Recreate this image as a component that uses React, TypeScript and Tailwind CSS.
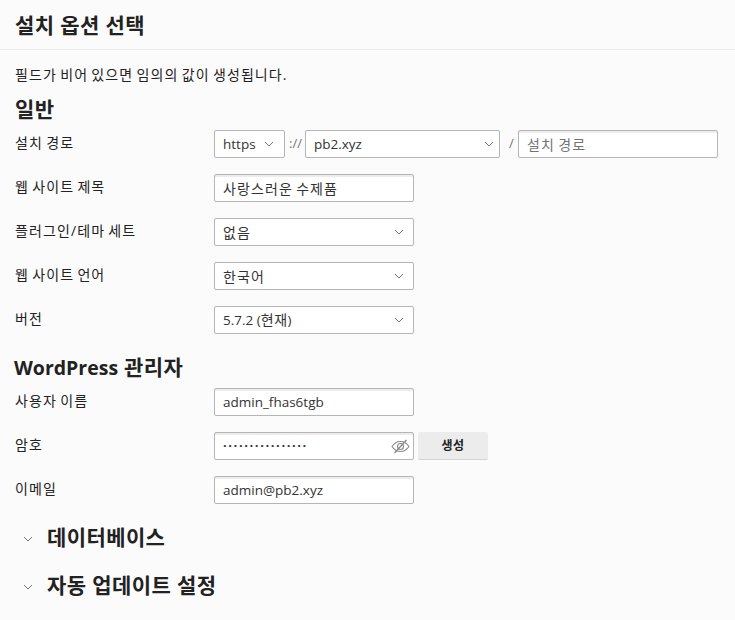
import React from "react";

const font = { fontFamily: '"Open Sans","Noto Sans CJK KR",sans-serif' };
const ko = "text-[14px] tracking-[1.1px] [word-spacing:-1.5px]";
const lat = "text-[13.5px]";
const head = "text-[21px] tracking-[0.4px] leading-[26px] font-bold text-[#222]";

function Chevron({ className = "" }: { className?: string }) {
  return (
    <svg width="10" height="10" viewBox="0 0 10 10" className={className} fill="none" stroke="#737373" strokeWidth="1">
      <path d="M1 3l4 4 4-4" />
    </svg>
  );
}

function Select({ children, className, pr = "pr-[9px]" }: { children: React.ReactNode; className: string; pr?: string }) {
  return (
    <div className={`h-7 flex items-center justify-between pl-[8px] ${pr} bg-white border border-[#b5b5b5] rounded-[2px] text-[#333] ${className}`}>
      <span>{children}</span>
      <Chevron />
    </div>
  );
}

function Input({ children, className = "w-[200px]", text = "text-[#333]" }: { children: React.ReactNode; className?: string; text?: string }) {
  return (
    <div className={`relative h-7 flex items-center pl-[8px] bg-white border border-[#b5b5b5] rounded-[2px] shadow-[inset_0_2px_0_#ededed] ${text} ${className}`}>
      {children}
    </div>
  );
}

function Row({ label, children, className = "mt-[16px]" }: { label: string; children: React.ReactNode; className?: string }) {
  return (
    <div className={`flex items-start ${className}`}>
      <div className={`w-[199px] leading-[26px] text-[#222] ${ko}`}>{label}</div>
      {children}
    </div>
  );
}

function Collapsed({ title, className = "" }: { title: string; className?: string }) {
  return (
    <div className={`flex items-center ${className}`}>
      <Chevron className="ml-[23px] mt-[4px]" />
      <h2 className={`ml-[14px] ${head}`}>{title}</h2>
    </div>
  );
}

export default function App() {
  return (
    <div style={font} className="w-[735px] h-[620px] overflow-hidden bg-[#fbfbfb]">
      <header className="h-[50px] border-b border-[#ececec] pl-[15px] pt-[12px]">
        <h1 className={head}>설치 옵션 선택</h1>
      </header>
      <main className="pl-[15px]">
        <p className={`mt-[15px] leading-[20px] text-[#222] ${ko}`}>필드가 비어 있으면 임의의 값이 생성됩니다.</p>
        <h2 className={`mt-[11px] ${head}`}>일반</h2>
        <Row label="설치 경로" className="mt-[8px]">
          <Select className={`w-[71px] ${lat}`} pr="pr-[10px]">https</Select>
          <span className="w-[20px] pl-[4px] text-[13px] leading-[26px] text-[#737373]">://</span>
          <Select className={`w-[195px] ${lat}`} pr="pr-[5px]">pb2.xyz</Select>
          <span className="w-[18px] pl-[9px] text-[13px] leading-[26px] text-[#737373]">/</span>
          <Input className={`w-[200px] ${ko}`} text="text-[#737373]">설치 경로</Input>
        </Row>
        <Row label="웹 사이트 제목">
          <Input className={`w-[200px] ${ko}`}>사랑스러운 수제품</Input>
        </Row>
        <Row label="플러그인/테마 세트">
          <Select className={`w-[200px] ${ko}`}>없음</Select>
        </Row>
        <Row label="웹 사이트 언어">
          <Select className={`w-[200px] ${ko}`}>한국어</Select>
        </Row>
        <Row label="버전">
          <Select className={`w-[200px] text-[13.5px]`}>
            5.7.2 (<span className="text-[14px] tracking-[0.5px]">현재</span>)
          </Select>
        </Row>
        <h2 className={`mt-[20px] -ml-px ${head}`}>
          <span className="text-[19.500px] tracking-normal">WordPress</span> 관리자
        </h2>
        <Row label="사용자 이름" className="mt-[7px]">
          <Input className={`w-[200px] ${lat}`}>admin_fhas6tgb</Input>
        </Row>
        <Row label="암호">
          <Input className="w-[200px] text-[13px] font-bold tracking-[1.6px]">
            ················
            <svg width="19" height="19" viewBox="0 0 19 19" fill="none" stroke="#8a8a8a" strokeWidth="1.100" className="absolute right-[3px] top-[4px]">
              <path d="M1 9.500c2.200-3.300 5-5 8.500-5s6.300 1.700 8.500 5c-2.200 3.300-5 5-8.500 5s-6.300-1.700-8.500-5z" />
              <circle cx="9.500" cy="9.500" r="3" />
              <path d="M15.500 3l-12 13" strokeWidth="1.400" />
            </svg>
          </Input>
          <button className="ml-[4px] w-[70px] h-7 bg-[#ececec] rounded-[2px] border-b border-[#d4d4d4] text-[12px] tracking-[0.5px] font-bold text-[#222]">생성</button>
        </Row>
        <Row label="이메일">
          <Input className={`w-[200px] ${lat}`}>admin@pb2.xyz</Input>
        </Row>
      </main>
      <Collapsed title="데이터베이스" className="mt-[20px]" />
      <Collapsed title="자동 업데이트 설정" className="mt-[22px]" />
    </div>
  );
}
